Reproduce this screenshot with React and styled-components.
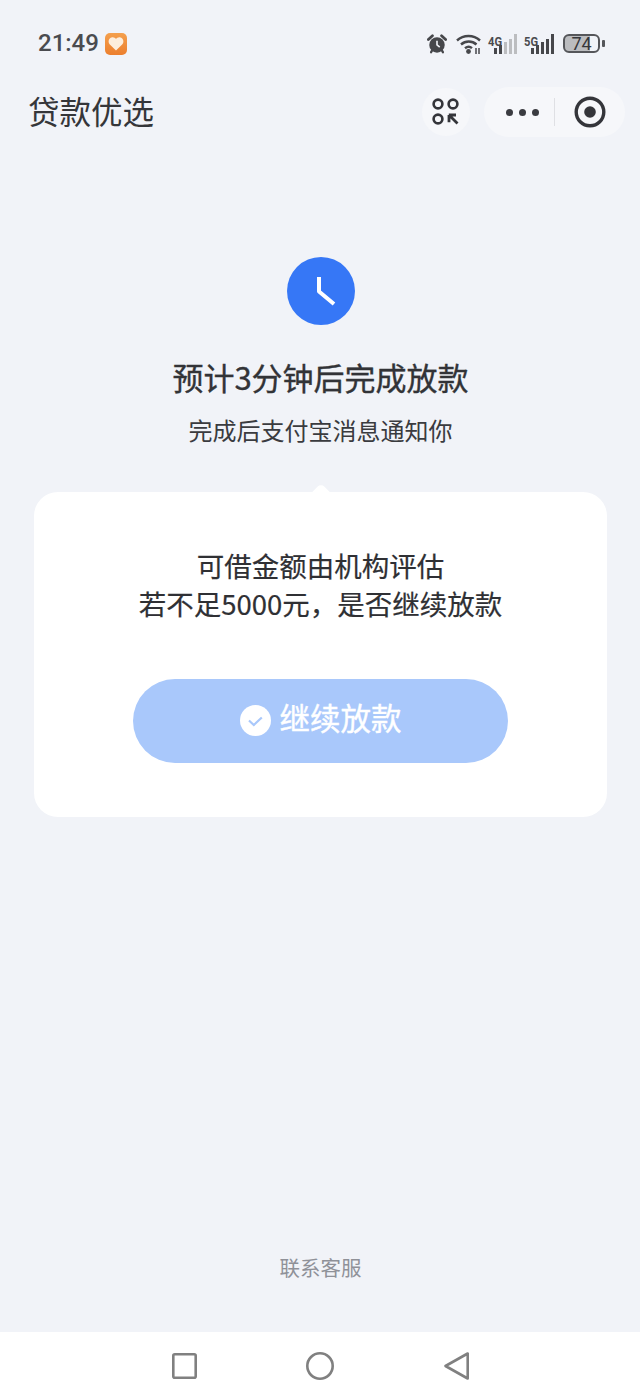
import React from "react";
import styled, { createGlobalStyle } from "styled-components";

const GlobalStyle = createGlobalStyle`
  html, body {
    margin: 0;
    padding: 0;
    background: #f1f3f8;
  }
  body {
    font-family: "Noto Sans CJK SC", "Noto Sans", sans-serif;
  }
`;

const Page = styled.div`
  width: 640px;
  height: 1400px;
  display: flex;
  flex-direction: column;
  background: #f1f3f8;
  overflow: hidden;
`;

const StatusBar = styled.div`
  height: 87px;
  box-sizing: border-box;
  padding: 31px 35px 0 38px;
  display: flex;
  justify-content: space-between;
  align-items: flex-start;
`;

const StatusLeft = styled.div`
  display: flex;
  align-items: center;
  gap: 6px;
  height: 25px;
`;

const Time = styled.span`
  font-family: Roboto, sans-serif;
  font-size: 24px;
  font-weight: 500;
  color: #4a4b4f;
  line-height: 25px;
`;

const AppBadge = styled.div`
  width: 22px;
  height: 22px;
  border-radius: 5px;
  background: linear-gradient(180deg, #f4a04e, #ec7f2e);
  display: flex;
  align-items: center;
  justify-content: center;
`;

const StatusRight = styled.div`
  display: flex;
  align-items: center;
  height: 25px;
`;

const NetworkLabel = styled.text`
  font-family: Roboto, sans-serif;
  font-size: 13px;
  font-weight: 700;
  fill: #4a4b4f;
`;

const Battery = styled.div`
  width: 37px;
  height: 19px;
  box-sizing: border-box;
  margin-left: 8px;
  border: 2px solid #55565a;
  border-radius: 6px;
  background: linear-gradient(90deg, #bbbcbf 76%, transparent 76%);
  display: flex;
  align-items: center;
  justify-content: center;
  font-family: Roboto, sans-serif;
  font-size: 18px;
  color: #36373b;
  line-height: 15px;
`;

const BatteryTip = styled.div`
  width: 3px;
  height: 7px;
  margin-left: 2px;
  border-radius: 1px;
  background: #55565a;
`;

const NavBar = styled.div`
  height: 50px;
  padding: 0 15px 0 28px;
  display: flex;
  align-items: center;
`;

const NavTitle = styled.h1`
  margin: 0 0 4px;
  flex: 1;
  font-size: 31.5px;
  font-weight: 400;
  line-height: 46px;
  color: #35363a;
`;

const RoundButton = styled.div`
  width: 48px;
  height: 48px;
  margin-right: 14px;
  border-radius: 50%;
  background: #f6f7fa;
  display: flex;
  align-items: center;
  justify-content: center;
`;

const Capsule = styled.div`
  width: 141px;
  height: 50px;
  border-radius: 25px;
  background: #f6f7fa;
  display: flex;
  align-items: center;
`;

const Dots = styled.div`
  width: 70px;
  display: flex;
  justify-content: center;
  gap: 6px;
  padding-left: 7px;
  box-sizing: border-box;
`;

const Dot = styled.span`
  width: 7px;
  height: 7px;
  border-radius: 50%;
  background: #3a3b40;
`;

const Divider = styled.span`
  width: 1px;
  height: 28px;
  background: #dfe0e4;
`;

const TargetWrap = styled.div`
  flex: 1;
  display: flex;
  justify-content: center;
`;

const Main = styled.main`
  flex: 1;
  padding: 120px 33px 0 34px;
  display: flex;
  flex-direction: column;
  align-items: center;
`;

const Heading = styled.h2`
  margin: 30px 0 0;
  font-size: 31px;
  font-weight: 400;
  -webkit-text-stroke: 0.35px #323337;
  line-height: 44px;
  color: #323337;
`;

const SubHeading = styled.p`
  margin: 14px 0 0;
  font-size: 24px;
  font-weight: 400;
  line-height: 34px;
  color: #3a3b3f;
`;

const Card = styled.section`
  position: relative;
  width: 100%;
  box-sizing: border-box;
  margin-top: 45px;
  padding: 54px 0 54px;
  border-radius: 24px;
  background: #fff;
  display: flex;
  flex-direction: column;
  align-items: center;

  &::before {
    content: "";
    position: absolute;
    top: -5px;
    left: 50%;
    width: 18px;
    height: 18px;
    margin-left: -9px;
    border-radius: 5px;
    background: #fff;
    transform: rotate(45deg);
  }
`;

const CardText = styled.p`
  margin: 0;
  font-size: 27.5px;
  font-weight: 400;
  -webkit-text-stroke: 0.2px #2f3034;
  line-height: 38px;
  text-align: center;
  color: #2f3034;
`;

const ContinueButton = styled.button`
  width: 375px;
  height: 84px;
  margin-top: 57px;
  padding: 0 0 2px;
  border: 0;
  border-radius: 42px;
  background: #a9c8fb;
  display: flex;
  align-items: center;
  justify-content: center;
  gap: 9px;
  font-family: inherit;
  font-size: 30.5px;
  font-weight: 400;
  -webkit-text-stroke: 0.4px #fff;
  color: #fff;
`;

const ButtonLabel = styled.span`
  margin-bottom: 6px;
`;

const ContactLink = styled.a`
  margin-top: auto;
  margin-bottom: 51px;
  font-size: 20.5px;
  line-height: 28px;
  color: #8f9198;
`;

const BottomNav = styled.nav`
  height: 68px;
  background: #fff;
  display: flex;
  align-items: center;
  justify-content: center;
  gap: 109.5px;
`;

const NavIcon = styled.svg`
  display: block;
  fill: none;
  stroke: #808080;
  stroke-width: 2.6;
`;

export default function App() {
  return (
    <Page>
      <GlobalStyle />
      <StatusBar>
        <StatusLeft>
          <Time>21:49</Time>
          <AppBadge>
            <svg width="16" height="15" viewBox="0 0 16 15">
              <path d="M8 14.500 1.600 8.200C-.4 6.100.7 1.500 4.200 1.200 5.800 1 7.200 1.800 8 3c.8-1.200 2.200-2 3.800-1.800 3.500.3 4.600 4.900 2.600 7z" fill="#fdeedd" />
            </svg>
          </AppBadge>
        </StatusLeft>
        <StatusRight>
          <svg width="20" height="22" viewBox="0 0 22 22" style={{ marginRight: 9 }}>
            <path d="M1.500 6 6 1.800M20.500 6 16 1.800" stroke="#46474b" strokeWidth="3" strokeLinecap="round" />
            <circle cx="11" cy="12" r="8.500" fill="#46474b" />
            <path d="M4.500 20 6 17.500M17.500 20 16 17.500" stroke="#46474b" strokeWidth="2.500" strokeLinecap="round" />
            <path d="M11 7.500V12l3 2.500" stroke="#f1f3f8" strokeWidth="1.800" fill="none" />
          </svg>
          <svg width="26" height="22" viewBox="0 0 26 22" style={{ marginRight: 5 }}>
            <g fill="none" stroke="#46474b" strokeWidth="2.400">
              <path d="M1 7.500C7.500 1.500 17.500 1.500 24 7.500" />
              <path d="M5 11.500c4.500-4 11-4 15.500 0" />
              <path d="M9 15.200c2.300-1.800 5-1.800 7 0" />
            </g>
            <circle cx="12.500" cy="18.500" r="2.400" fill="#46474b" />
            <path d="M20 15v6M23 15v6" stroke="#46474b" strokeWidth="1.500" />
          </svg>
          <svg width="31" height="22" viewBox="0 0 31 22" style={{ marginRight: 5 }}>
            <NetworkLabel x="1" y="12.500" textLength="14" lengthAdjust="spacingAndGlyphs">4G</NetworkLabel>
            <rect x="7" y="15" width="3" height="6" fill="#46474b" />
            <rect x="12" y="12" width="3" height="9" fill="#46474b" />
            <rect x="17" y="9" width="3" height="12" fill="#bcbdc0" />
            <rect x="22" y="6" width="3" height="15" fill="#bcbdc0" />
            <rect x="27" y="1" width="3" height="20" fill="#bcbdc0" />
          </svg>
          <svg width="32" height="22" viewBox="0 0 32 22">
            <NetworkLabel x="1" y="12.500" textLength="14" lengthAdjust="spacingAndGlyphs">5G</NetworkLabel>
            <rect x="8" y="15" width="3" height="6" fill="#46474b" />
            <rect x="13" y="12" width="3" height="9" fill="#46474b" />
            <rect x="18" y="9" width="3" height="12" fill="#46474b" />
            <rect x="23" y="6" width="3" height="15" fill="#46474b" />
            <rect x="28" y="1" width="3" height="20" fill="#46474b" />
          </svg>
          <Battery>74</Battery>
          <BatteryTip />
        </StatusRight>
      </StatusBar>

      <NavBar>
        <NavTitle>贷款优选</NavTitle>
        <RoundButton>
          <svg width="28" height="28" viewBox="0 0 28 28" fill="none" stroke="#34353a" strokeWidth="2.600">
            <circle cx="6" cy="6" r="4.400" />
            <circle cx="21" cy="6" r="4.400" />
            <circle cx="6" cy="21" r="4.400" />
            <path d="M16.800 17h7.200M17 17v7.200M17.500 17.500l8 8" strokeWidth="2.800" />
          </svg>
        </RoundButton>
        <Capsule>
          <Dots>
            <Dot />
            <Dot />
            <Dot />
          </Dots>
          <Divider />
          <TargetWrap>
            <svg width="32" height="32" viewBox="0 0 32 32">
              <circle cx="16" cy="16" r="13.800" fill="none" stroke="#34353a" strokeWidth="3.400" />
              <circle cx="16" cy="16" r="5.800" fill="#34353a" />
            </svg>
          </TargetWrap>
        </Capsule>
      </NavBar>

      <Main>
        <svg width="68" height="68" viewBox="0 0 68 68">
          <circle cx="34" cy="34" r="34" fill="#3677f6" />
          <path d="M32 20v14.500L47 47" fill="none" stroke="#fff" strokeWidth="4" strokeLinejoin="round" />
        </svg>
        <Heading>预计3分钟后完成放款</Heading>
        <SubHeading>完成后支付宝消息通知你</SubHeading>
        <Card>
          <CardText>
            可借金额由机构评估
            <br />
            若不足5000元，是否继续放款
          </CardText>
          <ContinueButton>
            <svg width="31" height="31" viewBox="0 0 31 31">
              <circle cx="15.500" cy="15.500" r="15.500" fill="#fff" />
              <path d="M9 15.500l4.800 4.500 8-7.500" fill="none" stroke="#a9c8fb" strokeWidth="2.200" />
            </svg>
            <ButtonLabel>继续放款</ButtonLabel>
          </ContinueButton>
        </Card>
        <ContactLink>联系客服</ContactLink>
      </Main>

      <BottomNav>
        <NavIcon width="25" height="26" viewBox="0 0 25 26">
          <rect x="1.300" y="1.300" width="22.400" height="23.400" rx="1.500" />
        </NavIcon>
        <NavIcon width="28" height="28" viewBox="0 0 28 28">
          <circle cx="14" cy="14" r="12.700" />
        </NavIcon>
        <NavIcon width="25" height="28" viewBox="0 0 25 28">
          <path d="M23.700 1.500v25L1.500 14z" strokeLinejoin="round" />
        </NavIcon>
      </BottomNav>
    </Page>
  );
}
